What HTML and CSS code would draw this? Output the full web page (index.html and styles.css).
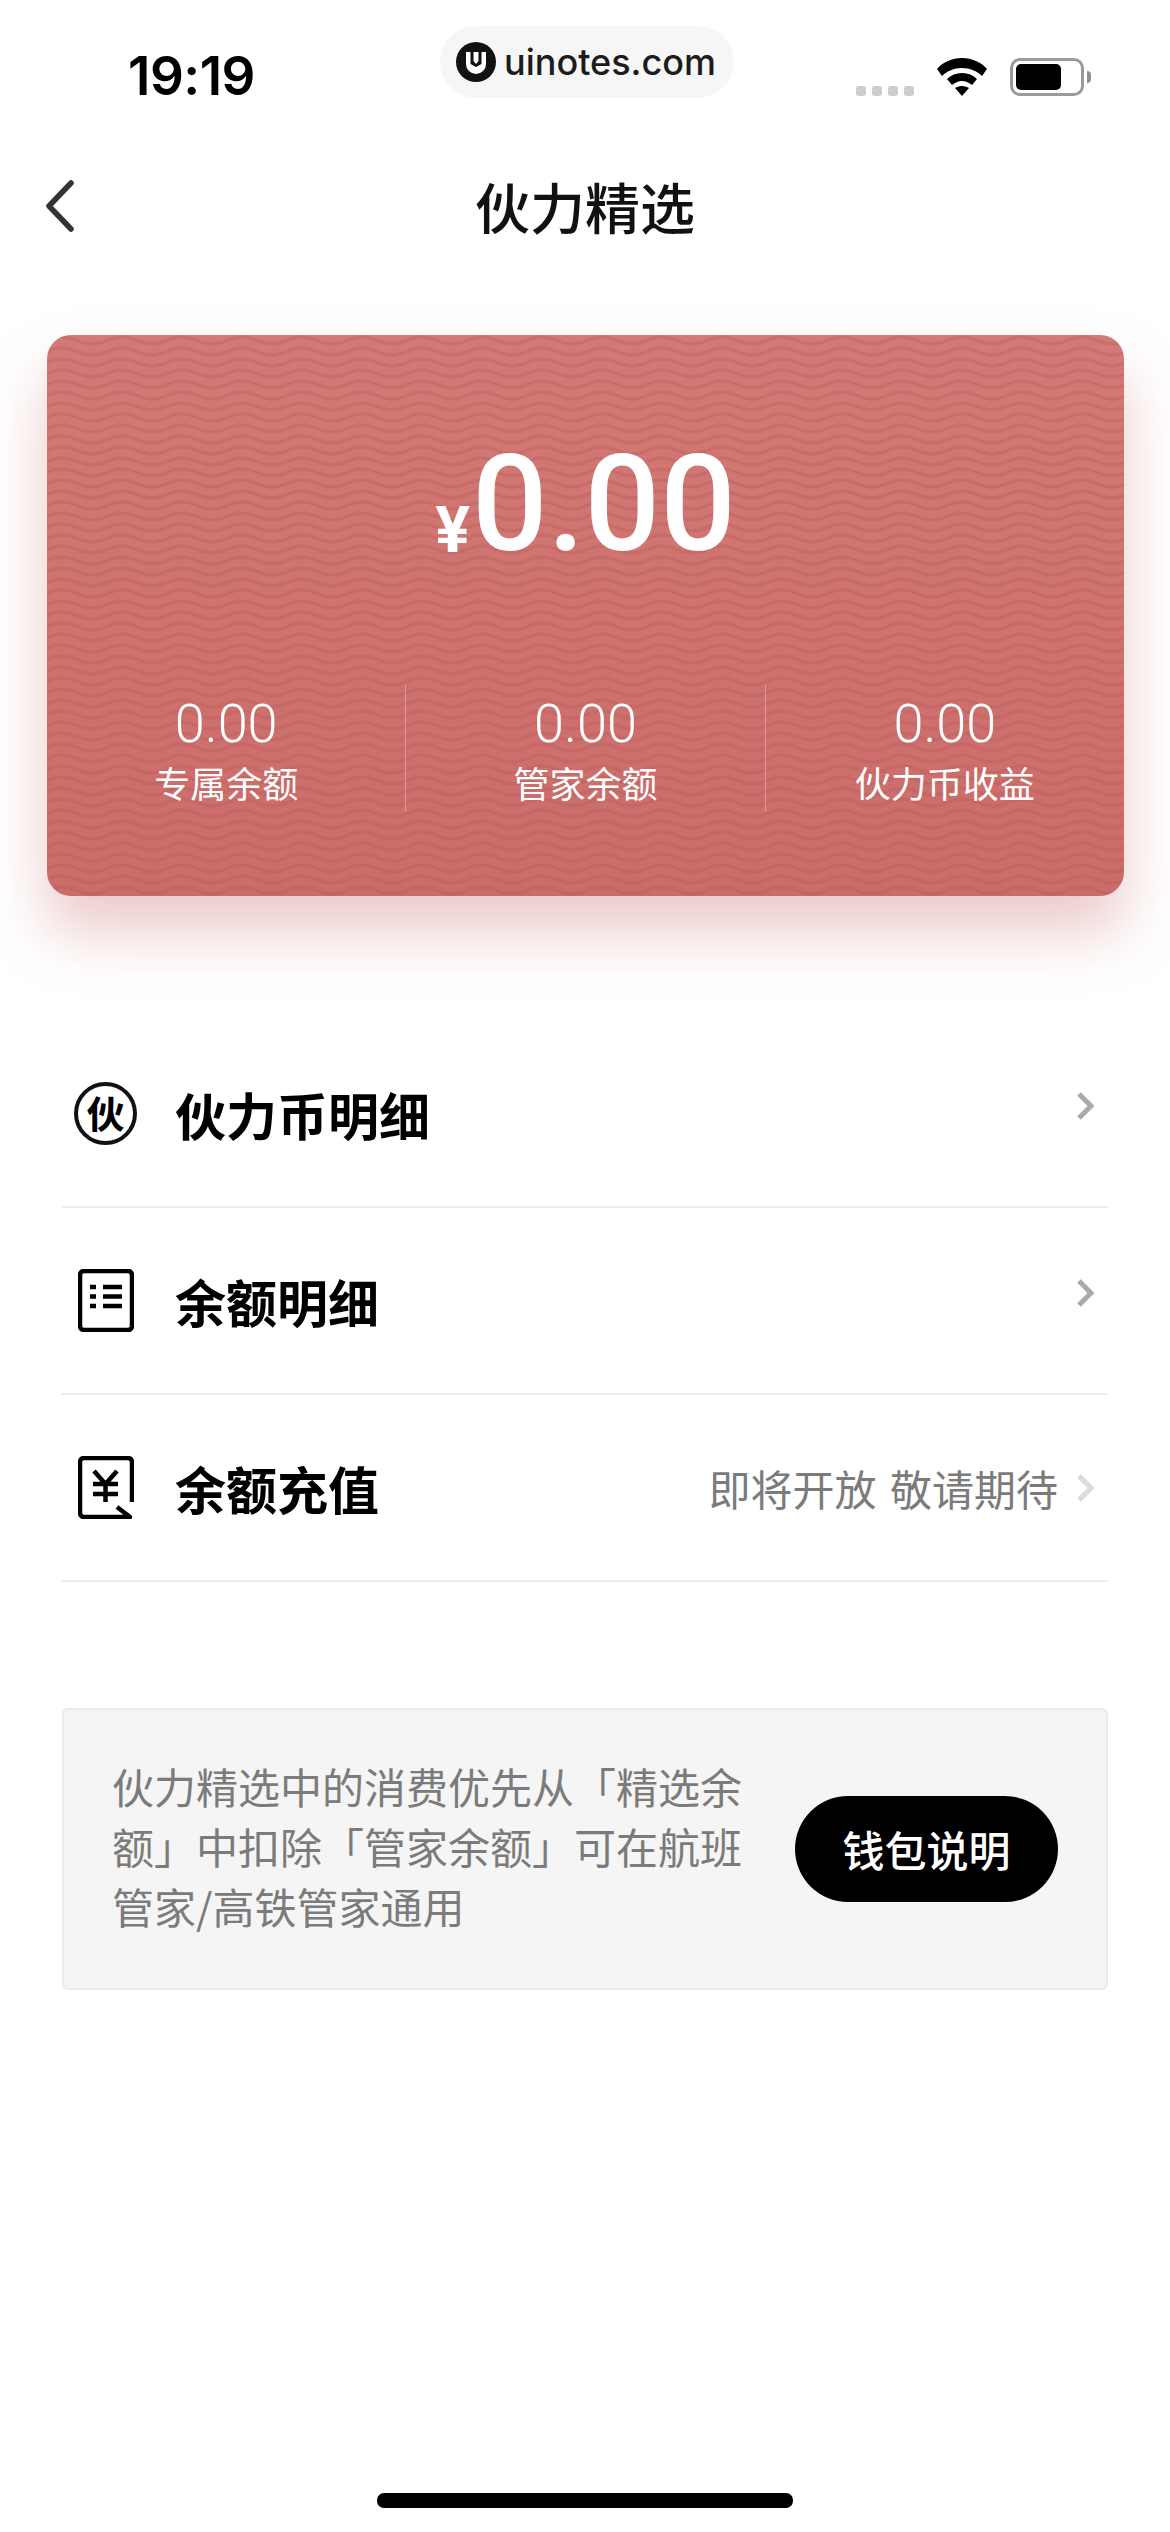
FILE: index.html
```html
<!DOCTYPE html>
<html lang="zh-CN">
<head>
    <meta charset="UTF-8">
    <title>伙力精选</title>
    <link rel="stylesheet" href="styles.css">
</head>
<body>
    <div id="page">
        <div class="status-bar">
            <span class="time">19:19</span>
            <div class="site-pill">
                <svg class="site-logo" viewBox="0 0 40 40"><circle cx="20" cy="20" r="20" fill="#111"/><path d="M10 10h20v12a10 10 0 0 1-20 0z" fill="#fff"/><path d="M14.500 10h3v9l2.500 3 2.500-3v-9h3v12l-5.500 3-5.500-3z" fill="#111"/></svg>
                <span class="site-name">uinotes.com</span>
            </div>
            <div class="status-icons">
                <div class="signal"><i></i><i></i><i></i><i></i></div>
                <svg class="wifi" viewBox="0 0 50 38"><path d="M25 0C15 0 6 4 0 11l5 7c5-5 12-8 20-8s15 3 20 8l5-7C44 4 35 0 25 0z" fill="#000"/><path d="M25 15c-6 0-11 2-15 6l5 6c3-2 6-4 10-4s7 2 10 4l5-6c-4-4-9-6-15-6z" fill="#000"/><path d="M25 28c-3 0-5 1-7 2l7 8 7-8c-2-1-4-2-7-2z" fill="#000"/></svg>
                <div class="battery"><div class="battery-level"></div></div>
                <div class="battery-nub"></div>
            </div>
        </div>

        <div class="nav-bar">
            <svg class="back" viewBox="0 0 30 52"><path d="M27 3 5 26l22 23" fill="none" stroke="#333" stroke-width="5.500" stroke-linecap="round" stroke-linejoin="round"/></svg>
            <h1 class="nav-title">伙力精选</h1>
        </div>

        <div class="wallet-card">
            <div class="total"><span class="yen">¥</span><span class="amount">0.00</span></div>
            <div class="balances">
                <div class="balance"><span class="balance-num">0.00</span><span class="balance-label">专属余额</span></div>
                <div class="balance"><span class="balance-num">0.00</span><span class="balance-label">管家余额</span></div>
                <div class="balance"><span class="balance-num">0.00</span><span class="balance-label">伙力币收益</span></div>
            </div>
        </div>

        <ul class="menu">
            <li class="menu-row">
                <div class="menu-icon">
                    <span class="coin">伙</span>
                </div>
                <span class="menu-name">伙力币明细</span>
                <svg class="arrow arrow-up" viewBox="0 0 18 30"><path d="M3 3l12 12L3 27" fill="none" stroke="#a9a9a9" stroke-width="5"/></svg>
            </li>
            <li class="menu-row">
                <div class="menu-icon">
                    <svg viewBox="0 0 56 63"><rect x="2" y="2" width="52" height="59" rx="4" fill="none" stroke="#000" stroke-width="4.500"/><path d="M25 18h19M25 27.500h19M25 37h19M12 18h6M12 27.500h6M12 37h6" stroke="#000" stroke-width="4.500"/></svg>
                </div>
                <span class="menu-name">余额明细</span>
                <svg class="arrow arrow-up" viewBox="0 0 18 30"><path d="M3 3l12 12L3 27" fill="none" stroke="#a9a9a9" stroke-width="5"/></svg>
            </li>
            <li class="menu-row">
                <div class="menu-icon">
                    <svg viewBox="0 0 56 63"><path d="M54 46V6a4 4 0 0 0-4-4H6a4 4 0 0 0-4 4v51a4 4 0 0 0 4 4h46L39 51" fill="none" stroke="#000" stroke-width="4.500" stroke-linejoin="round"/><path d="M16 15l11.500 13L39 15M15 28h25M15 38h25M27.500 28v18" fill="none" stroke="#000" stroke-width="4.500"/></svg>
                </div>
                <span class="menu-name">余额充值</span>
                <span class="menu-tip">即将开放 敬请期待</span>
                <svg class="arrow" viewBox="0 0 18 30"><path d="M3 3l12 12L3 27" fill="none" stroke="#dcdcdc" stroke-width="5"/></svg>
            </li>
        </ul>

        <div class="notice">
            <p class="notice-text">伙力精选中的消费优先从「精选余额」中扣除「管家余额」可在航班管家/高铁管家通用</p>
            <span class="notice-btn">钱包说明</span>
        </div>

        <div class="home-bar"></div>
    </div>
</body>
</html>
```

FILE: styles.css
```css
*{
    margin: 0;
    padding: 0;
    box-sizing: border-box;
}
ul{
    list-style: none;
}
body{
    background: #fff;
    font-family: "Noto Sans CJK SC", "Noto Sans", sans-serif;
    color: #000;
}
#page{
    width: 1170px;
    height: 2532px;
    display: flex;
    flex-direction: column;
    overflow: hidden;
}

/* status bar */
.status-bar{
    height: 110px;
    padding: 26px 0 0 128px;
    display: flex;
    align-items: flex-start;
}
.time{
    width: 312px;
    margin-top: 24px;
    font-family: Inter, sans-serif;
    font-size: 53px;
    line-height: 52px;
    font-weight: 600;
    letter-spacing: -0.5px;
}
.site-pill{
    width: 294px;
    height: 72px;
    padding-left: 16px;
    border-radius: 36px;
    background: #f6f6f6;
    display: flex;
    align-items: center;
    gap: 8px;
}
.site-logo{
    width: 40px;
    height: 40px;
}
.site-name{
    font-family: Inter, sans-serif;
    font-size: 36px;
    font-weight: 500;
    color: #1c1c1c;
}
.status-icons{
    display: flex;
    align-items: center;
    margin-top: 32px;
    margin-left: 122px;
}
.signal{
    display: flex;
    gap: 6px;
    margin-top: 28px;
    margin-right: 23px;
}
.signal i{
    width: 10px;
    height: 10px;
    border-radius: 3px;
    background: #cdcdcd;
}
.wifi{
    width: 50px;
    height: 38px;
    margin-right: 23px;
}
.battery{
    width: 74px;
    height: 38px;
    border: 3px solid #9a9a9a;
    border-radius: 10px;
    padding: 3px;
}
.battery-level{
    width: 45px;
    height: 100%;
    background: #000;
    border-radius: 5px;
}
.battery-nub{
    width: 4px;
    height: 12px;
    margin-left: 3px;
    background: #8f8f8f;
    border-radius: 0 4px 4px 0;
}

/* nav */
.nav-bar{
    height: 225px;
    padding: 0 0 0 44px;
    position: relative;
}
.back{
    width: 30px;
    height: 52px;
    margin-top: 70px;
    display: block;
}
.nav-title{
    position: absolute;
    left: 0;
    right: 0;
    top: 62px;
    text-align: center;
    font-size: 55px;
    line-height: 66px;
    font-weight: 500;
    color: #111;
}

/* card */
.wallet-card{
    width: 1077px;
    height: 561px;
    margin-left: 47px;
    border-radius: 24px;
    color: #fff;
    background-color: #cb6d6a;
    background-image:
        url("data:image/svg+xml;utf8,<svg xmlns='http://www.w3.org/2000/svg' width='60' height='11'><path d='M0 5.500Q15 -1.500 30 5.500T60 5.500M0 16.500Q15 9.500 30 16.500T60 16.500M0 -5.500Q15 -12.500 30 -5.500T60 -5.500' fill='none' stroke='%23b85654' stroke-opacity='.3' stroke-width='3.500'/></svg>"),
        linear-gradient(#d27a77, #cb6c69);
    box-shadow: 0 36px 60px rgba(199, 102, 99, 0.35);
    display: flex;
    flex-direction: column;
}
.total{
    height: 349px;
    padding-top: 95px;
    display: flex;
    justify-content: center;
    align-items: flex-start;
}
.yen{
    margin-top: 64px;
    margin-right: 2px;
    font-family: Roboto, sans-serif;
    font-size: 65px;
    line-height: 72px;
    font-weight: 700;
}
.amount{
    font-family: Roboto, sans-serif;
    font-size: 133px;
    line-height: 150px;
    font-weight: 500;
}
.balances{
    display: flex;
}
.balance{
    flex: 1;
    height: 128px;
    display: flex;
    flex-direction: column;
    align-items: center;
    border-right: 1px solid rgba(255, 255, 255, 0.3);
}
.balance:last-child{
    border-right: none;
}
.balance-num{
    margin-top: 11px;
    font-family: Roboto, sans-serif;
    font-size: 54px;
    line-height: 58px;
    font-weight: 300;
}
.balance-label{
    margin-top: 4px;
    font-size: 36px;
    line-height: 50px;
    font-weight: 400;
}

/* menu */
.menu{
    margin: 125px 62px 0;
}
.menu-row{
    height: 187px;
    display: flex;
    align-items: center;
    padding-right: 14px;
    border-bottom: 2px solid #ececec;
}
.menu-icon{
    width: 113px;
    padding-left: 12px;
    display: flex;
}
.menu-icon svg{
    width: 56px;
    height: 63px;
    margin-left: 4px;
}
.coin{
    width: 63px;
    height: 63px;
    border: 4px solid #111;
    border-radius: 50%;
    font-size: 38px;
    line-height: 52px;
    font-weight: 700;
    text-align: center;
}
.menu-name{
    flex: 1;
    font-size: 51px;
    font-weight: 700;
    line-height: 60px;
}
.menu-tip{
    margin-right: 18px;
    font-size: 42px;
    font-weight: 400;
    color: #7b7b7b;
    word-spacing: 4px;
}
.arrow{
    width: 18px;
    height: 30px;
}
.arrow-up{
    margin-top: -16px;
}

/* notice */
.notice{
    width: 1046px;
    height: 282px;
    margin: 126px 62px 0;
    padding: 0 48px 6px 48px;
    background: #f5f5f5;
    border: 2px solid #ebebeb;
    border-radius: 6px;
    display: flex;
    align-items: center;
    justify-content: space-between;
}
.notice-text{
    width: 636px;
    font-size: 42px;
    line-height: 60px;
    color: #7b7b7b;
}
.notice-btn{
    width: 263px;
    height: 106px;
    margin-top: 6px;
    border-radius: 53px;
    background: #000;
    color: #fff;
    font-size: 42px;
    font-weight: 500;
    line-height: 106px;
    text-align: center;
}

/* home indicator */
.home-bar{
    width: 416px;
    height: 15px;
    margin: auto auto 24px;
    background: #000;
    border-radius: 7px;
}
```
